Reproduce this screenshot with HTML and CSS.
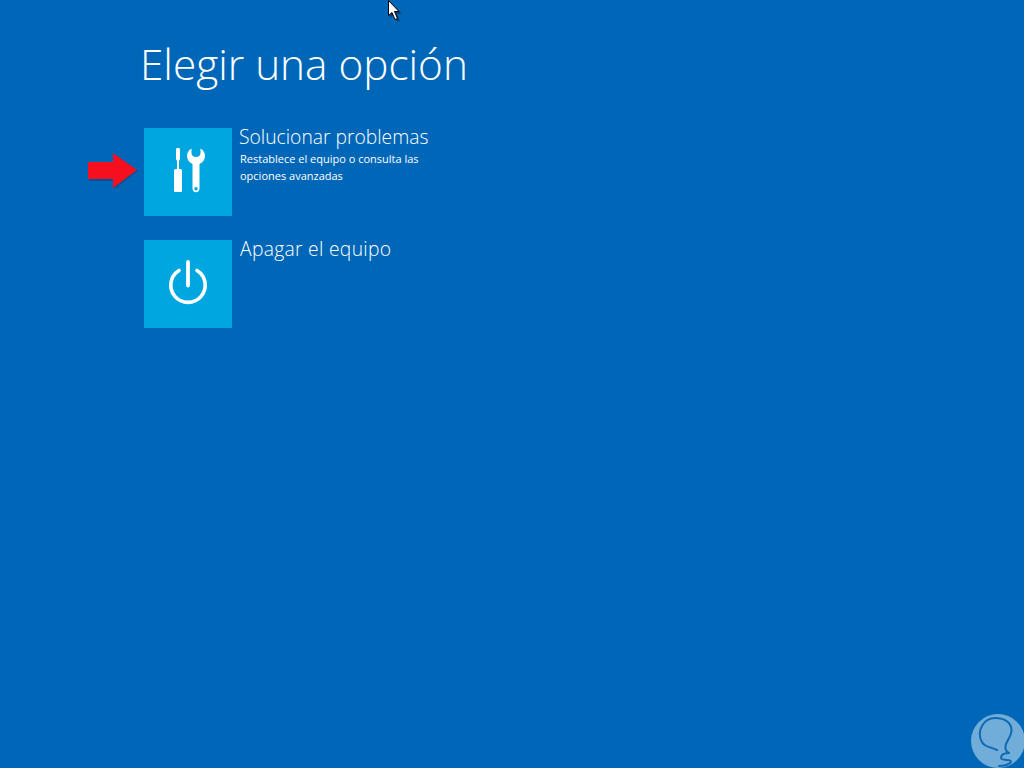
FILE: index.html
```html
<!DOCTYPE html>
<html lang="es">
<head>
    <meta charset="UTF-8">
    <meta name="viewport" content="width=device-width, initial-scale=1.0">
    <title>Elegir una opción</title>
    <link rel="stylesheet" href="styles.css">
</head>
<body>

    <div class="container">
        <h1>Elegir una opción</h1>

        <div class="options">
            <div class="option">
                <div class="tile">
                    <svg width="88" height="88" viewBox="0 0 88 88">
                        <!-- screwdriver -->
                        <path fill="#fff" d="M32 21 C32 20 33 20 34 20 C35 20 36 20 36 21 L36 31 L35 33 L35 41 L36.500 41 C37.500 41 38 42 38 43 L38 62.500 C38 63.500 37.500 64 36.500 64 L31.500 64 C30.500 64 30 63.500 30 62.500 L30 43 C30 42 30.500 41 31.500 41 L33 41 L33 33 L32 31 Z"/>
                        <!-- wrench -->
                        <path fill="#fff" fill-rule="evenodd" d="M47.500 20.500 L47.500 25 C47.500 27.500 49.500 29 52 29 C54.500 29 56.500 27.500 56.500 25 L56.500 20.500 C59.500 22 61 25 61 28 C61 31.500 59 34.500 55.500 36 L55.500 60.500 C55.500 62.800 54 64.300 52 64.300 C50 64.300 48.500 62.800 48.500 60.500 L48.500 36 C45 34.500 43 31.500 43 28 C43 25 44.500 22 47.500 20.500 Z M52 59 A1.700 1.700 0 1 0 52 62.400 A1.700 1.700 0 1 0 52 59 Z"/>
                    </svg>
                </div>
                <div class="option-text">
                    <div class="option-title">Solucionar problemas</div>
                    <div class="option-desc">Restablece el equipo o consulta las<br>opciones avanzadas</div>
                </div>
            </div>

            <div class="option">
                <div class="tile">
                    <svg width="88" height="88" viewBox="0 0 88 88">
                        <path fill="none" stroke="#fff" stroke-width="3.600" stroke-linecap="round" d="M35 30.500 A17.200 17.200 0 1 0 53 30.500"/>
                        <path fill="none" stroke="#fff" stroke-width="3.800" stroke-linecap="round" d="M44 22 L44 45.500"/>
                    </svg>
                </div>
                <div class="option-text second">
                    <div class="option-title">Apagar el equipo</div>
                </div>
            </div>
        </div>
    </div>

    <!-- red arrow added over the screenshot -->
    <svg class="arrow" width="52" height="38" viewBox="0 0 52 38">
        <path fill="#003f7a" opacity="0.5" d="M2 11 L28 11 L28 2 L51 18 L28 36 L28 28 L2 28 Z"/>
        <path fill="#f60f1e" d="M1 9 L26 9 L26 0 L50 17 L26 35 L26 26 L1 26 Z"/>
    </svg>

    <!-- mouse pointer -->
    <svg class="cursor" width="14" height="23" viewBox="0 0 14 23">
        <path fill="#000" opacity="0.35" d="M2 2 L2 18 L6 15 L9 22 L12 21 L9 14 L14 14 Z"/>
        <path fill="#fff" stroke="#000" stroke-width="1" d="M0.500 0.500 L0.500 15.500 L4 12.500 L7 19.500 L9.500 18.500 L6.500 11.500 L11 11.500 Z"/>
    </svg>

    <!-- watermark -->
    <svg class="mark" width="54" height="54" viewBox="0 0 54 54">
        <circle cx="27" cy="27" r="27" fill="#70add9"/>
        <path fill="none" stroke="#0e68b3" stroke-width="2" stroke-linecap="round" stroke-linejoin="round" d="M26 36 C20 33 12 33 10 26 C6 16 13 4 24 4 C34 4 41 9 40.500 17 C40 24 35 27 34.500 32 C34 36 36 38 38 39 C33 39 30 41 30 44 C30 47 40 45 40 47.500 C40 50 33 52 28 52"/>
    </svg>

</body>
</html>
```

FILE: styles.css
```css
body {
    margin: 0;
    height: 768px;
    overflow: hidden;
    background-color: #0067b8;
    color: white;
    font-family: "Open Sans", "Noto Sans", sans-serif;
}
.container {
    padding: 36px 0 0 140px;
}
h1 {
    margin: 0 0 36px 0;
    font-size: 42.300px;
    font-weight: 300;
    line-height: 56px;
}
.options {
    display: flex;
    flex-direction: column;
    gap: 24px;
    margin-left: 4px;
}
.option {
    display: flex;
    gap: 7px;
}
.tile {
    width: 88px;
    height: 88px;
    background-color: #00a6e0;
    flex-shrink: 0;
}
.option-text {
    margin-top: -1px;
}
.option-title {
    font-size: 19.300px;
    font-weight: 300;
    line-height: 20px;
}
.option-desc {
    margin-top: 3px;
    margin-left: 1px;
    font-size: 11px;
    line-height: 17px;
}
.second {
    margin-left: 1px;
}
.second .option-title {
    letter-spacing: 0.300px;
}
.arrow {
    position: absolute;
    left: 87px;
    top: 153px;
}
.cursor {
    position: absolute;
    left: 388px;
    top: 0;
}
.mark {
    position: absolute;
    left: 971px;
    top: 714px;
}
```
